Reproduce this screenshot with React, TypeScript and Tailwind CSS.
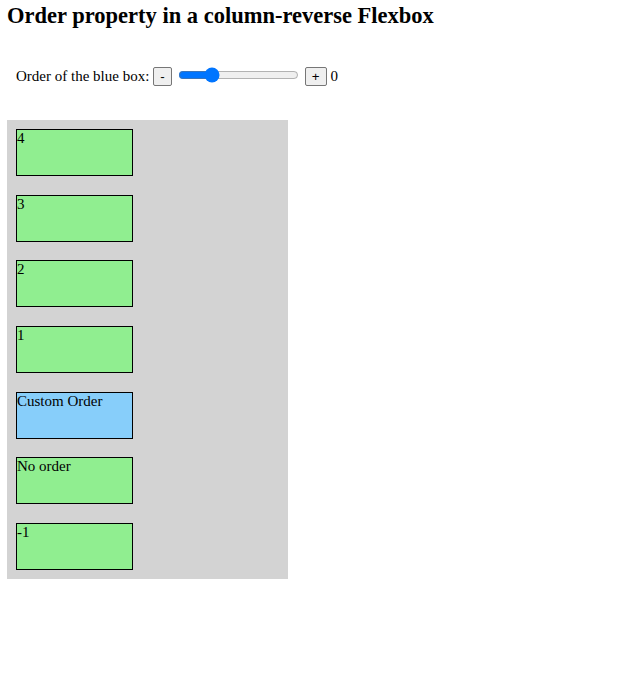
import { useState } from "react";

const BOXES: { label: string; order?: string }[] = [
  { label: "-1", order: "-order-1" },
  { label: "No order" },
  { label: "Custom Order" },
  { label: "1", order: "order-1" },
  { label: "2", order: "order-2" },
  { label: "3", order: "order-3" },
  { label: "4", order: "order-4" },
];

export default function App() {
  const [custom, setCustom] = useState(0);
  const min = -2;
  const max = 6;

  return (
    <div className="min-h-screen bg-white font-['Liberation_Serif',serif] text-[15px] text-black">
      <h1 className="px-[7px] pt-[3px] text-[22.5px] font-bold leading-[26px]">
        Order property in a column-reverse Flexbox
      </h1>

      <div className="mt-[38px] flex h-[19px] items-center pl-[16px] leading-[17px]">
        <span>Order of the blue box:</span>
        <button
          className="ml-[4px] h-[19px] rounded-[2px] border border-[#767676] bg-[#efefef] px-[6px] font-['Liberation_Sans',sans-serif] text-[13.33px] leading-[15px]"
          onClick={() => setCustom((v) => Math.max(min, v - 1))}
        >
          -
        </button>
        <input
          type="range"
          min={min}
          max={max}
          value={custom}
          onChange={(e) => setCustom(Number(e.target.value))}
          className="ml-[6px] mr-[6px] -mt-[4px] w-[121px] accent-[#0075ff]"
        />
        <button
          className="h-[19px] rounded-[2px] border border-[#767676] bg-[#efefef] px-[6px] font-['Liberation_Sans',sans-serif] text-[13.33px] leading-[15px]"
          onClick={() => setCustom((v) => Math.min(max, v + 1))}
        >
          +
        </button>
        <span className="ml-[4px]">{custom}</span>
      </div>

      <div className="ml-[7px] mt-[34px] flex w-[281px] flex-col-reverse gap-[18.67px] bg-[#d3d3d3] p-[9px]">
        {BOXES.map((b) => {
          const isCustom = b.label === "Custom Order";
          return (
            <div
              key={b.label}
              className={`h-[47px] w-[117px] shrink-0 border border-black leading-[17px] ${
                isCustom ? "bg-[#87cefa]" : "bg-[#90ee90]"
              } ${b.order ?? ""}`}
              style={isCustom ? { order: custom } : undefined}
            >
              {b.label}
            </div>
          );
        })}
      </div>
    </div>
  );
}
